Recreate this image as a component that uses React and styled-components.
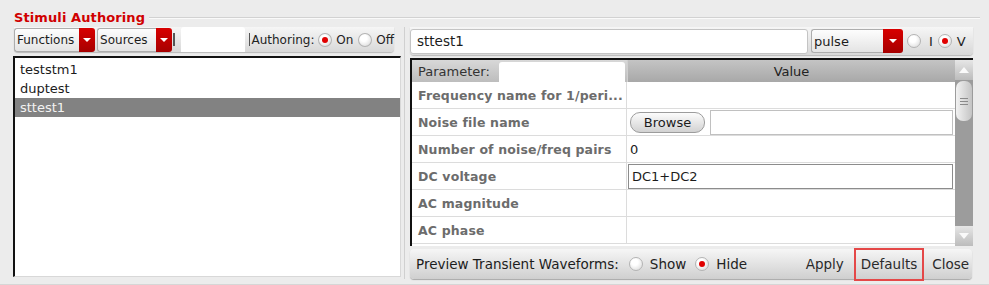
import React from 'react';
import styled, { createGlobalStyle } from 'styled-components';

const GlobalStyle = createGlobalStyle`
  html, body {
    margin: 0;
    padding: 0;
  }
  body {
    width: 989px;
    height: 285px;
    overflow: hidden;
    background: #ececec;
    font-family: 'DejaVu Sans', 'Liberation Sans', sans-serif;
    color: #1c1c1c;
  }
`;

const Frame = styled.div`
  width: 989px;
  height: 285px;
  box-sizing: border-box;
  padding: 8px 9px 0 13px;
  display: flex;
  flex-direction: column;
  border-bottom: 1px solid #d6d6d6;
`;

const TitleRow = styled.div`
  display: flex;
  align-items: center;
  height: 18px;
  padding-left: 1px;
`;

const Title = styled.span`
  color: #d00000;
  font-weight: bold;
  font-size: 13px;
  letter-spacing: 0.1px;
`;

const TitleRule = styled.div`
  flex: 1;
  margin: 1px 0 0 4px;
  border-top: 1px solid #d2d2d2;
  border-bottom: 1px solid #fafafa;
`;

const Body = styled.div`
  display: flex;
  gap: 3px;
  margin-top: 1px;
`;

const LeftColumn = styled.div`
  width: 388px;
  display: flex;
  flex-direction: column;
  gap: 4px;
`;

const RightColumn = styled.div`
  width: 568px;
  display: flex;
  flex-direction: column;
  border-left: 1px solid #d0d0d0;
  padding-left: 5px;
`;

const Toolbar = styled.div`
  display: flex;
  align-items: center;
  height: ${({ $h }) => $h}px;
  width: ${({ $w }) => $w}px;
  margin-left: ${({ $ml }) => $ml || 0}px;
  background: linear-gradient(#f6f6f6, #d8d8d8);
  border-radius: 0 0 4px 4px;
  box-shadow: 0 1px 1px #b8b8b8;
  font-size: 12px;
`;

const Combo = styled.div`
  display: flex;
  height: 24px;
  width: ${({ $w }) => $w}px;
  margin-left: ${({ $ml }) => $ml || 0}px;
  box-sizing: border-box;
`;

const ComboBody = styled.div`
  flex: 1;
  display: flex;
  align-items: center;
  padding-left: 2px;
  border: 1px solid #adadad;
  border-right: none;
  border-radius: 3px 0 0 3px;
  background: linear-gradient(#fdfdfd, #e4e4e4);
  font-size: ${({ $fs }) => $fs || 12}px;
`;

const ComboArrow = styled.div`
  width: ${({ $w }) => $w}px;
  display: flex;
  align-items: center;
  justify-content: center;
  background: linear-gradient(#d80000, #a60000);
  border-radius: 0 3px 3px 0;

  &::after {
    content: '';
    border-left: 4px solid transparent;
    border-right: 4px solid transparent;
    border-top: 4px solid #fff;
  }
`;

const Sep = styled.div`
  width: ${({ $w }) => $w || 2}px;
  height: ${({ $h }) => $h}px;
  background: #555;
  margin: 0 ${({ $mr }) => $mr}px 0 ${({ $ml }) => $ml}px;
`;

const SmallInput = styled.div`
  width: 64px;
  height: 25px;
  background: #fff;
  border-radius: 3px 3px 0 0;
`;

const Label = styled.span`
  font-size: ${({ $fs }) => $fs || 12}px;
  margin-left: ${({ $ml }) => $ml || 0}px;
  color: #222;
`;

const Radio = styled.span`
  width: 12px;
  height: 12px;
  border-radius: 50%;
  margin-left: ${({ $ml }) => $ml || 0}px;
  border: 1px solid #b4b4b4;
  background: radial-gradient(circle at 40% 35%, #ffffff 30%, #d4d4d4 100%);
  display: inline-flex;
  align-items: center;
  justify-content: center;

  &::after {
    content: '';
    width: 6px;
    height: 6px;
    border-radius: 50%;
    background: ${({ $on }) => ($on ? '#e00000' : 'transparent')};
  }
`;

const List = styled.div`
  height: 221px;
  background: #fff;
  border-top: 2px solid #111;
  border-left: 2px solid #111;
  border-right: 1px solid #d8d8d8;
  border-bottom: 1px solid #d8d8d8;
  padding-top: 2px;
  box-sizing: border-box;
`;

const ListItem = styled.div`
  height: 19px;
  line-height: 19px;
  padding-left: 5px;
  font-size: 13px;
  background: ${({ $sel }) => ($sel ? '#828282' : 'transparent')};
  color: ${({ $sel }) => ($sel ? '#f2f2f2' : '#1c1c1c')};
`;

const NameInput = styled.div`
  width: 398px;
  height: 25px;
  box-sizing: border-box;
  background: #fff;
  border: 1px solid #c4c4c4;
  border-radius: 3px;
  display: flex;
  align-items: center;
  padding-left: 6px;
  font-size: 13.5px;
`;

const TableBox = styled.div`
  display: flex;
  width: 563px;
  height: 188px;
  margin-top: 3px;
  box-sizing: border-box;
  border-top: 2px solid #111;
  border-left: 2px solid #111;
  background: #fff;
`;

const TableMain = styled.div`
  flex: 1;
  display: flex;
  flex-direction: column;
`;

const HeaderRow = styled.div`
  display: flex;
  height: 22px;
`;

const ParamHead = styled.div`
  width: 215px;
  display: flex;
  align-items: center;
  background: linear-gradient(#d8d8d8, #bdbdbd);
  font-size: 13px;
  color: #333;
  padding-left: 6px;
  box-sizing: border-box;
  gap: 9px;
`;

const HeadInput = styled.div`
  width: 126px;
  height: 20px;
  background: #fff;
  border-radius: 3px 3px 0 0;
  align-self: flex-end;
`;

const ValueHead = styled.div`
  flex: 1;
  display: flex;
  align-items: center;
  justify-content: center;
  background: linear-gradient(#c4c4c4, #a8a8a8);
  border-left: 1px solid #d0d0d0;
  font-size: 13px;
  color: #222;
`;

const Row = styled.div`
  display: flex;
  height: 27px;
  box-sizing: border-box;
  border-bottom: 1px solid #dcdcdc;
`;

const LabelCell = styled.div`
  width: 215px;
  box-sizing: border-box;
  display: flex;
  align-items: center;
  padding-left: 6px;
  border-right: 1px solid #dcdcdc;
  font-weight: bold;
  font-size: 12.5px;
  letter-spacing: 0.15px;
  color: #6c6c6c;
  white-space: nowrap;
`;

const ValueCell = styled.div`
  flex: 1;
  display: flex;
  align-items: center;
  padding: 0 2px 0 3px;
  font-size: 13px;
  gap: 5px;
`;

const BrowseButton = styled.div`
  width: 75px;
  height: 21px;
  box-sizing: border-box;
  border: 1px solid #9c9c9c;
  border-radius: 10px;
  background: linear-gradient(#fcfcfc, #d2d2d2);
  display: flex;
  align-items: center;
  justify-content: center;
  font-size: 13px;
`;

const CellInput = styled.div`
  flex: 1;
  height: 25px;
  box-sizing: border-box;
  margin-left: ${({ $dark }) => ($dark ? -2 : 0)}px;
  border: 1px solid ${({ $dark }) => ($dark ? '#8c8c8c' : '#c0c0c0')};
  display: flex;
  align-items: center;
  padding-left: 3px;
  font-size: 13px;
  background: #fff;
`;

const Scrollbar = styled.div`
  width: 18px;
  display: flex;
  flex-direction: column;
  background: #9c9c9c;
`;

const ScrollButton = styled.div`
  height: 20px;
  background: linear-gradient(#e6e6e6, #bcbcbc);
  display: flex;
  align-items: center;
  justify-content: center;

  &::after {
    content: '';
    border-left: 5px solid transparent;
    border-right: 5px solid transparent;
    ${({ $up }) => ($up ? 'border-bottom' : 'border-top')}: 6px solid #fafafa;
  }
`;

const Thumb = styled.div`
  height: 40px;
  margin: 1px 1px 0;
  border-radius: 7px;
  background: linear-gradient(90deg, #f2f2f2, #c4c4c4);
  display: flex;
  flex-direction: column;
  align-items: center;
  justify-content: center;
  gap: 2px;

  span {
    width: 8px;
    height: 1px;
    background: #8a8a8a;
  }
`;

const Track = styled.div`
  flex: 1;
`;

const BottomBar = styled.div`
  display: flex;
  align-items: center;
  width: 562px;
  height: 30px;
  margin-top: 3px;
  box-sizing: border-box;
  padding: 0 0 0 6px;
  border-radius: 4px;
  background: linear-gradient(#f6f6f6, #cfcfcf);
  box-shadow: 0 1px 1px #a8a8a8;
  font-size: 13.5px;
`;

const Spacer = styled.div`
  flex: 1;
`;

const FlatButton = styled.div`
  display: flex;
  align-items: center;
  height: ${({ $hl }) => ($hl ? 33 : 26)}px;
  box-sizing: border-box;
  padding: ${({ $pad }) => $pad};
  margin-left: ${({ $ml }) => $ml || 0}px;
  border: ${({ $hl }) => ($hl ? '2px solid #e44848' : 'none')};
  font-size: 13.5px;
  color: #2a2a2a;
`;

const params = [
  { name: 'Frequency name for 1/peri...' },
  { name: 'Noise file name', browse: true },
  { name: 'Number of noise/freq pairs', value: '0' },
  { name: 'DC voltage', input: 'DC1+DC2' },
  { name: 'AC magnitude' },
  { name: 'AC phase' },
];

const App = () => (
  <>
    <GlobalStyle />
    <Frame>
      <TitleRow>
        <Title>Stimuli Authoring</Title>
        <TitleRule />
      </TitleRow>
      <Body>
        <LeftColumn>
          <Toolbar $h={25} $w={380} $ml={1}>
            <Combo $w={82}>
              <ComboBody>Functions</ComboBody>
              <ComboArrow $w={16} />
            </Combo>
            <Combo $w={76} $ml={2}>
              <ComboBody>Sources</ComboBody>
              <ComboArrow $w={16} />
            </Combo>
            <Sep $h={13} $ml={1} $mr={6} />
            <SmallInput />
            <Sep $w={1} $h={13} $ml={4} $mr={0} />
            <Label $ml={2}>Authoring:</Label>
            <Radio $on $ml={4} />
            <Label $ml={4}>On</Label>
            <Radio $ml={5} />
            <Label $ml={4}>Off</Label>
          </Toolbar>
          <List>
            <ListItem>teststm1</ListItem>
            <ListItem>duptest</ListItem>
            <ListItem $sel>sttest1</ListItem>
          </List>
        </LeftColumn>
        <RightColumn>
          <Toolbar $h={28} $w={563}>
            <NameInput>sttest1</NameInput>
            <Combo $w={92} $ml={3}>
              <ComboBody $fs={13}>pulse</ComboBody>
              <ComboArrow $w={20} />
            </Combo>
            <Radio $ml={4} />
            <Label $ml={8} $fs={13}>I</Label>
            <Radio $on $ml={5} />
            <Label $ml={5} $fs={13}>V</Label>
          </Toolbar>
          <TableBox>
            <TableMain>
              <HeaderRow>
                <ParamHead>
                  Parameter:
                  <HeadInput />
                </ParamHead>
                <ValueHead>Value</ValueHead>
              </HeaderRow>
              {params.map((p) => (
                <Row key={p.name}>
                  <LabelCell>{p.name}</LabelCell>
                  <ValueCell>
                    {p.browse && (
                      <>
                        <BrowseButton>Browse</BrowseButton>
                        <CellInput />
                      </>
                    )}
                    {p.value}
                    {p.input && <CellInput $dark>{p.input}</CellInput>}
                  </ValueCell>
                </Row>
              ))}
            </TableMain>
            <Scrollbar>
              <ScrollButton $up />
              <Thumb>
                <span />
                <span />
                <span />
              </Thumb>
              <Track />
              <ScrollButton />
            </Scrollbar>
          </TableBox>
          <BottomBar>
            Preview Transient Waveforms:
            <Radio $ml={10} />
            <Label $ml={7} $fs={13.5}>Show</Label>
            <Radio $on $ml={9} />
            <Label $ml={7} $fs={13.5}>Hide</Label>
            <Spacer />
            <FlatButton $pad="0">Apply</FlatButton>
            <FlatButton $hl $pad="0 5px" $ml={10}>Defaults</FlatButton>
            <FlatButton $pad="0 3px 0 8px">Close</FlatButton>
          </BottomBar>
        </RightColumn>
      </Body>
    </Frame>
  </>
);

export default App;
